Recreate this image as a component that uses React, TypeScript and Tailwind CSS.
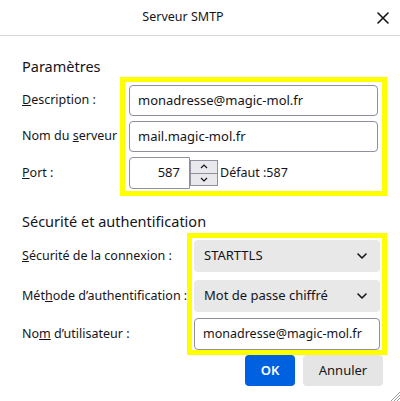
import * as React from "react"

function Chevron() {
    return (
        <svg width="10" height="6" viewBox="0 0 10 6" fill="none" stroke="#15141a" strokeWidth="1.6" strokeLinecap="round" strokeLinejoin="round">
            <path d="M1 1l4 4 4-4" />
        </svg>
    )
}

function Select({ value }: { value: string }) {
    return (
        <div className="h-[32px] flex items-center justify-between rounded-[4px] bg-[#e8e8e8] pl-[10px] pr-[13px] text-[13px] text-[#15141a]">
            <span>{value}</span>
            <Chevron />
        </div>
    )
}

function TextInput({ value }: { value: string }) {
    return (
        <div className="h-[31px] flex items-center rounded-[4px] border border-[#8f8f9d] bg-white pl-[8px] text-[13px] text-[#15141a]">
            {value}
        </div>
    )
}

function Label({ children, h }: { children: React.ReactNode; h: string }) {
    return <div className={`flex items-center whitespace-nowrap text-[12.5px] text-[#15141a] ${h}`}>{children}</div>
}

export default function App() {
    return (
        <div
            className="relative w-[400px] h-[401px] bg-white overflow-hidden"
            style={{ fontFamily: '"Noto Sans", "Open Sans", sans-serif' }}
        >
            {/* title bar */}
            <div className="h-[36px] flex items-center border-b border-[#d7d7db]">
                <div className="flex-1 text-center text-[12.5px] text-[#15141a]">Serveur SMTP</div>
                <button className="w-[34px] h-[36px] flex items-center justify-center text-[#15141a]">
                    <svg width="12" height="12" viewBox="0 0 12 12" stroke="currentColor" strokeWidth="1.6" strokeLinecap="round">
                        <path d="M1 1l10 10M11 1L1 11" />
                    </svg>
                </button>
            </div>

            <div className="pl-[22px] pr-[13px]">
                <h2 className="mt-[20px] text-[14.5px] leading-[20px] text-[#15141a]">Paramètres</h2>
                <div className="flex mt-[1px]">
                    <div className="w-[98px] flex flex-col gap-[5px] pt-[8px]">
                        <Label h="h-[31px]"><span><u>D</u>escription :</span></Label>
                        <Label h="h-[31px]"><span>Nom du <u>s</u>erveur</span></Label>
                        <Label h="h-[32px]"><span><u>P</u>ort :</span></Label>
                    </div>
                    <div className="w-[267px] border-[5px] border-[#ffff00] px-[4px] pt-[3px] pb-[2px] flex flex-col gap-[5px]">
                        <TextInput value="monadresse@magic-mol.fr" />
                        <TextInput value="mail.magic-mol.fr" />
                        <div className="h-[32px] flex items-center">
                            <div className="w-[61px] h-[32px] flex items-center justify-end rounded-l-[4px] border border-[#8f8f9d] pr-[9px] text-[13px] text-[#15141a]">
                                587
                            </div>
                            <div className="w-[28px] h-[26px] flex flex-col border border-[#8f8f9d] bg-[#e9e9ed]">
                                <div className="flex-1 flex items-center justify-center border-b border-[#8f8f9d]">
                                    <svg width="8" height="5" viewBox="0 0 8 5" fill="none" stroke="#15141a" strokeWidth="1.2"><path d="M1 4l3-3 3 3" /></svg>
                                </div>
                                <div className="flex-1 flex items-center justify-center">
                                    <svg width="8" height="5" viewBox="0 0 8 5" fill="none" stroke="#15141a" strokeWidth="1.2"><path d="M1 1l3 3 3-3" /></svg>
                                </div>
                            </div>
                            <span className="ml-[2px] text-[12.5px] text-[#15141a]">Défaut :587</span>
                        </div>
                    </div>
                </div>

                <h2 className="mt-[15px] text-[14.5px] leading-[20px] text-[#15141a]">Sécurité et authentification</h2>
                <div className="flex mt-[2px]">
                    <div className="w-[165px] flex flex-col pt-[7px]">
                        <Label h="h-[32px]"><span><u>S</u>écurité de la connexion :</span></Label>
                        <Label h="h-[32px] mt-[8px]"><span>Mét<u>h</u>ode d’authentification :</span></Label>
                        <Label h="h-[32px] mt-[6px]"><span>No<u>m</u> d’utilisateur :</span></Label>
                    </div>
                    <div className="w-[203px] border-[5px] border-[#ffff00] px-[2px] pt-[2px] pb-0 flex flex-col">
                        <Select value="STARTTLS" />
                        <div className="mt-[8px]"><Select value="Mot de passe chiffré" /></div>
                        <div className="mt-[6px] h-[32px] flex items-center rounded-[4px] border border-[#8f8f9d] pl-[8px] text-[12.5px] text-[#15141a]">
                            monadresse@magic-mol.fr
                        </div>
                    </div>
                </div>

                <div className="flex justify-end gap-[8px] pr-[4px]">
                    <button className="w-[50px] h-[31px] rounded-[4px] bg-[#0061e0] text-[13px] font-semibold text-white">OK</button>
                    <button className="w-[80px] h-[31px] rounded-[4px] bg-[#e5e5e5] text-[13px] text-[#15141a]">Annuler</button>
                </div>
            </div>

            <svg className="absolute right-0 bottom-0" width="10" height="10" viewBox="0 0 10 10" stroke="#9a9a9a" strokeWidth="1">
                <path d="M10 1L1 10M10 4L4 10M10 7L7 10" />
            </svg>
        </div>
    )
}
